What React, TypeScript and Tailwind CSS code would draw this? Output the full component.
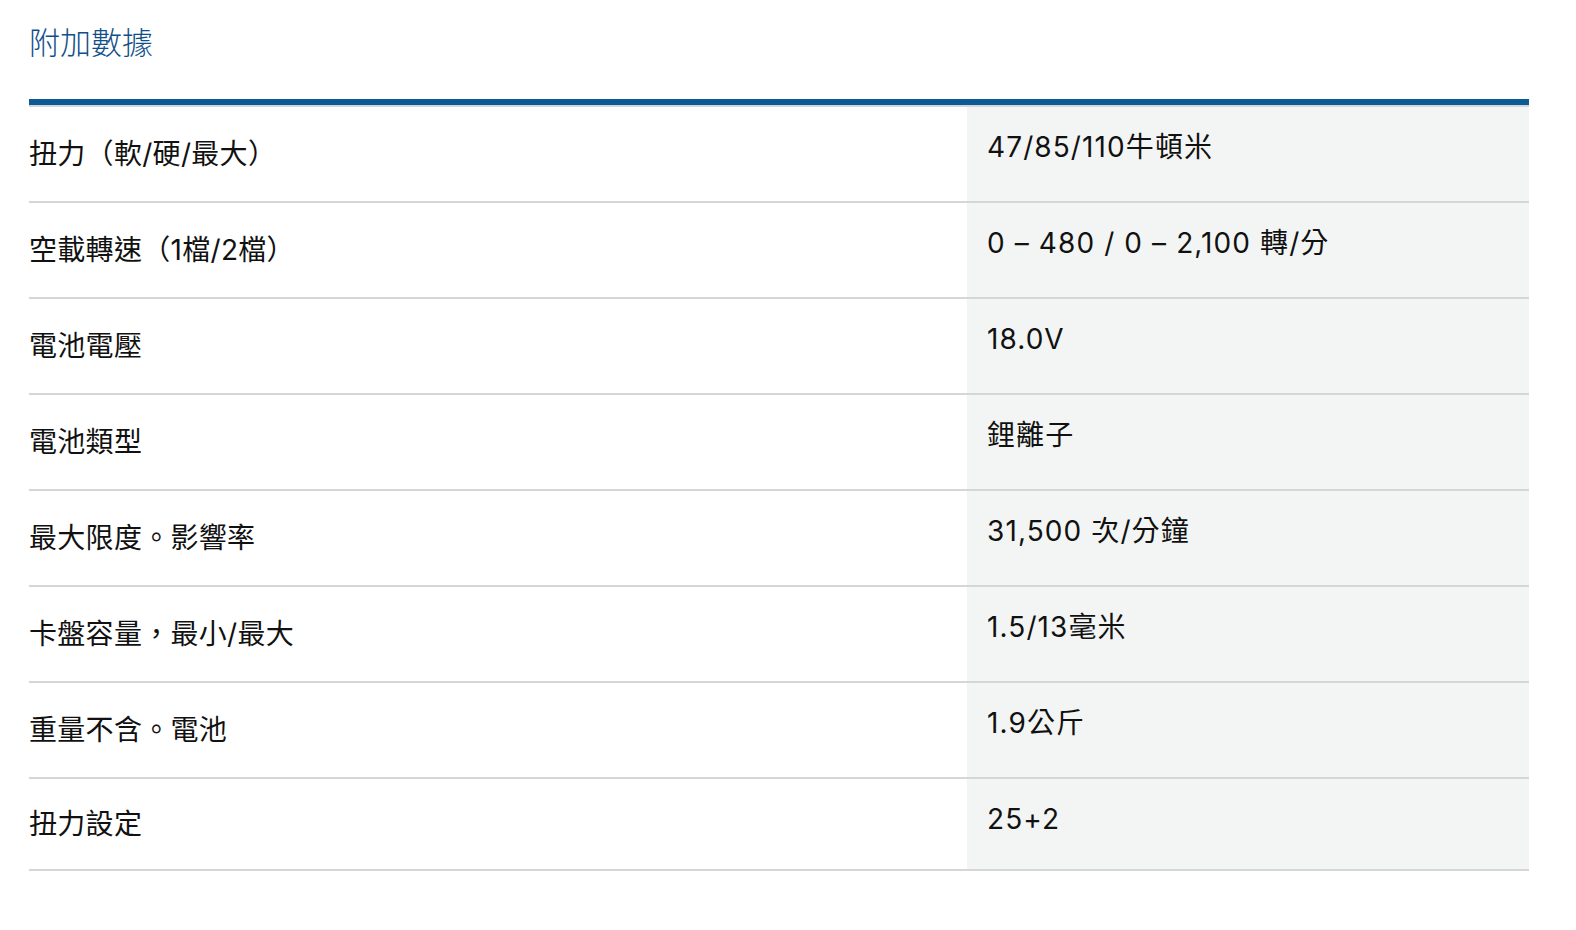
type SpecRow = { label: string; value: string };

const rows: SpecRow[] = [
  { label: "扭力（軟/硬/最大）", value: "47/85/110牛頓米" },
  { label: "空載轉速（1檔/2檔）", value: "0 – 480 / 0 – 2,100 轉/分" },
  { label: "電池電壓", value: "18.0V" },
  { label: "電池類型", value: "鋰離子" },
  { label: "最大限度。影響率", value: "31,500 次/分鐘" },
  { label: "卡盤容量，最小/最大", value: "1.5/13毫米" },
  { label: "重量不含。電池", value: "1.9公斤" },
  { label: "扭力設定", value: "25+2" },
];

export default function App() {
  return (
    <div
      className="min-h-screen bg-white px-[29px] pt-[19px]"
      style={{ fontFamily: 'Inter, "Noto Sans CJK TC", sans-serif' }}
    >
      <h2 className="mb-[33px] text-[31px] font-light leading-[47px] text-[#124f8a]">附加數據</h2>

      <div className="w-[1500px] border-t-[6px] border-[#0b5a94]">
        {rows.map((row, idx) => (
          <div
            key={row.label}
            className={
              "grid grid-cols-[938px_1fr] border-t-2 border-[#d5d6d9] " +
              (idx === rows.length - 1 ? "h-[94px] border-b-2" : "h-[96px]")
            }
          >
            <div className="flex items-center text-[28px] leading-[40px] tracking-[0.3px] text-[#111111]">
              {row.label}
            </div>
            <div className="bg-[#f3f5f4] pl-5 pt-[20px] text-[28px] leading-[40px] tracking-[1.1px] text-[#111111]">
              {row.value}
            </div>
          </div>
        ))}
      </div>
    </div>
  );
}
